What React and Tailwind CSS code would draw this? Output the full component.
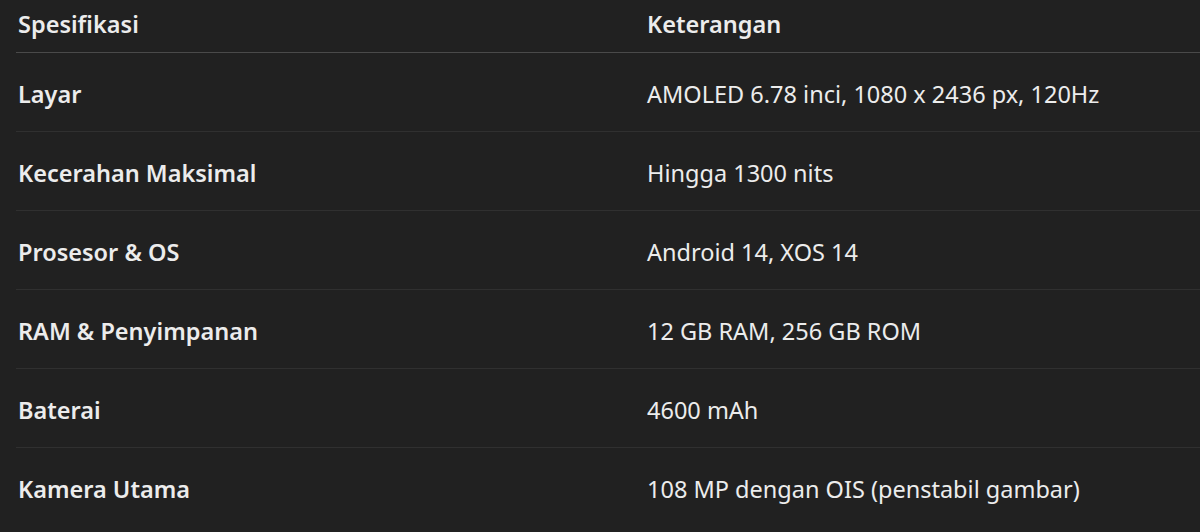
import React from 'react';

const rows = [
  ['Layar', 'AMOLED 6.78 inci, 1080 x 2436 px, 120Hz'],
  ['Kecerahan Maksimal', 'Hingga 1300 nits'],
  ['Prosesor & OS', 'Android 14, XOS 14'],
  ['RAM & Penyimpanan', '12 GB RAM, 256 GB ROM'],
  ['Baterai', '4600 mAh'],
  ['Kamera Utama', '108 MP dengan OIS (penstabil gambar)'],
];

export default function App() {
  return (
    <div className="min-h-screen w-full bg-[#212121] pl-4 text-[#ececec] font-['Noto_Sans',sans-serif] text-[23.5px]">
      <table className="w-full border-collapse text-left">
        <thead>
          <tr className="border-b border-[#4a4a4a]">
            <th className="h-[52px] w-[629px] pl-0.5 pb-0.5 font-semibold">Spesifikasi</th>
            <th className="h-[52px] pl-0.5 pb-0.5 font-semibold">Keterangan</th>
          </tr>
        </thead>
        <tbody>
          {rows.map(([spec, info], i) => (
            <tr key={i} className="border-b border-[#303030] last:border-b-0">
              <td className="h-[79px] pl-0.5 pt-1.5 font-semibold">{spec}</td>
              <td className="h-[79px] pl-0.5 pt-1.5">{info}</td>
            </tr>
          ))}
        </tbody>
      </table>
    </div>
  );
}
